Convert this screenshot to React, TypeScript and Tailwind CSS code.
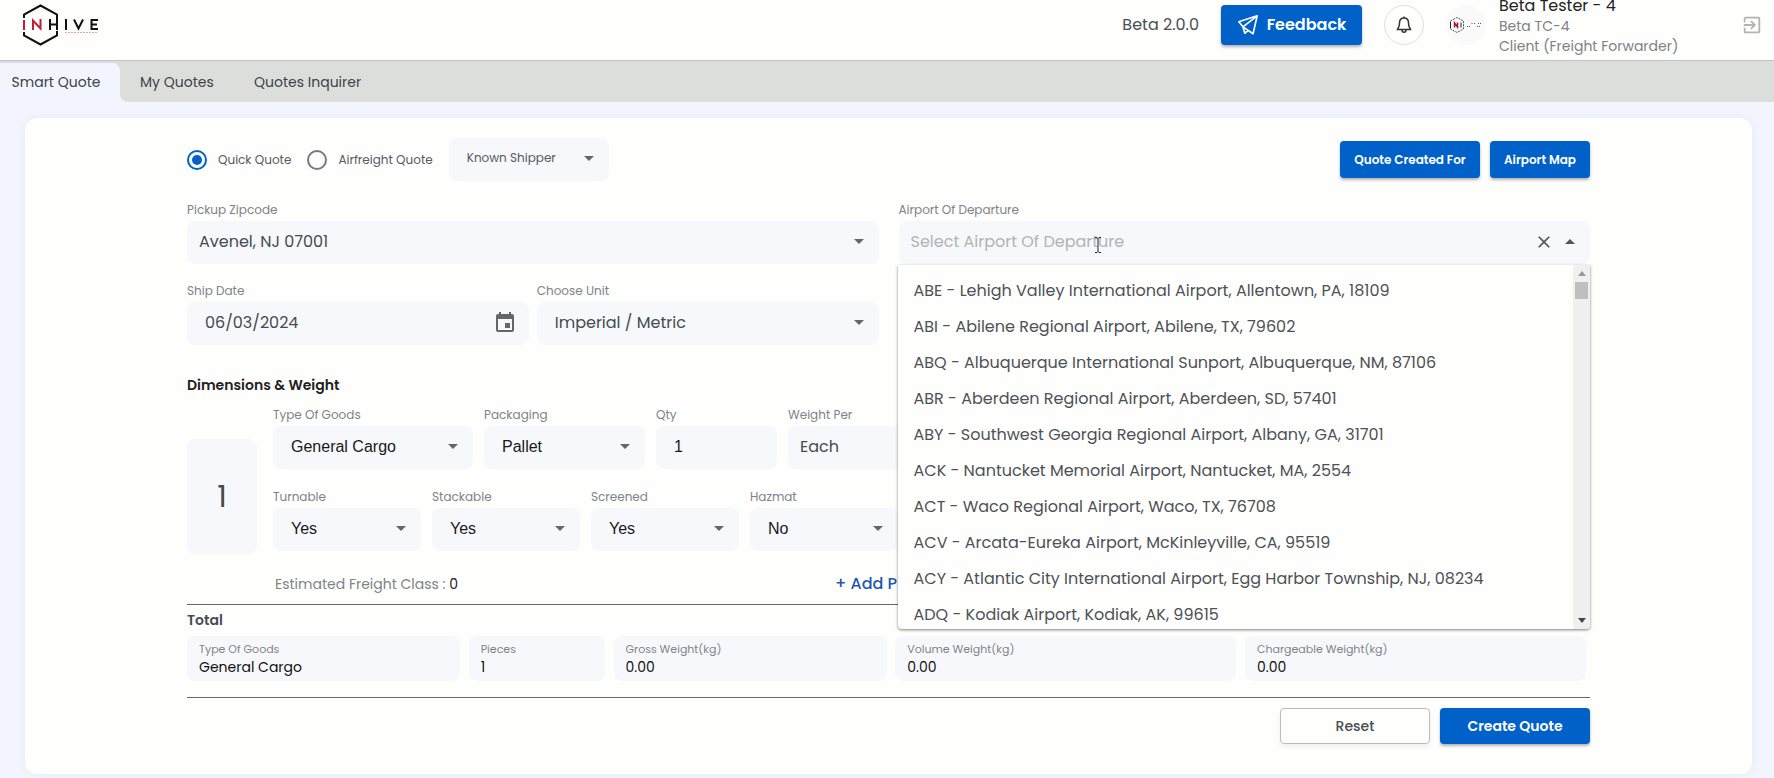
import React, { useState } from 'react';
import { MdArrowDropDown, MdArrowDropUp, MdClose, MdOutlineExitToApp, MdInsertInvitation } from 'react-icons/md';

const TABS = ['Smart Quote', 'My Quotes', 'Quotes Inquirer'];

const AIRPORTS = [
  'ABE - Lehigh Valley International Airport, Allentown, PA, 18109',
  'ABI - Abilene Regional Airport, Abilene, TX, 79602',
  'ABQ - Albuquerque International Sunport, Albuquerque, NM, 87106',
  'ABR - Aberdeen Regional Airport, Aberdeen, SD, 57401',
  'ABY - Southwest Georgia Regional Airport, Albany, GA, 31701',
  'ACK - Nantucket Memorial Airport, Nantucket, MA, 2554',
  'ACT - Waco Regional Airport, Waco, TX, 76708',
  'ACV - Arcata-Eureka Airport, McKinleyville, CA, 95519',
  'ACY - Atlantic City International Airport, Egg Harbor Township, NJ, 08234',
  'ADQ - Kodiak Airport, Kodiak, AK, 99615',
];

const TOTALS = [
  { label: 'Type Of Goods', value: 'General Cargo', width: 'w-[273px]' },
  { label: 'Pieces', value: '1', width: 'w-[136px]' },
  { label: 'Gross Weight(kg)', value: '0.00', width: 'w-[273px]' },
  { label: 'Volume Weight(kg)', value: '0.00', width: 'w-[341px]' },
  { label: 'Chargeable Weight(kg)', value: '0.00', width: 'w-[341px]' },
];

const PRIMARY = 'rounded bg-[#0061c9] font-semibold text-white shadow-[0_2px_3px_rgba(0,0,0,0.3)]';
const LABEL = 'mb-0.5 block text-xs leading-[18px] text-[#7d8488]';

function Logo() {
  return (
    <svg viewBox="0 0 80 42" className="mb-2.5 h-[42px] w-20" role="img" aria-label="InHive">
      <path d="M2 14V10.500L18.500 1.500 35 10.500V15M2 28V31.500L18.500 40.500 35 31.500V27" fill="none" stroke="#111" strokeWidth="2" />
      <path d="M2 16V26M11 26V16.500L18.500 24.500V15" fill="none" stroke="#c21f36" strokeWidth="2" />
      <path d="M28 15V26M35 15V26M28 20.500H35M44 15V26M52 15.500L56.500 24.500 61 15.500M76 16H69.500V25H76M69.500 20.500H75" fill="none" stroke="#111" strokeWidth="2" />
      <path d="M43 28.500H76" stroke="#e0a8b0" strokeWidth="1" strokeDasharray="2 1" />
    </svg>
  );
}

function AvatarLogo() {
  return (
    <svg viewBox="0 0 34 18" className="h-[18px] w-[34px]" role="img" aria-label="InHive">
      <path d="M1.500 5 8 1.500 14.500 5V13L8 16.500 1.500 13Z" fill="none" stroke="#555" strokeDasharray="2 1" />
      <path d="M1.500 6V12" stroke="#222" />
      <path d="M5.500 11.500V7L8.500 11V6.500" fill="none" stroke="#a8142c" strokeWidth="1.500" />
      <path d="M12 6.500V11.500" stroke="#222" />
      <path d="M18 10.500H21M23 7V9M25.500 7V9M29 7.500H32M28 10.500H32" stroke="#555" strokeDasharray="1 1" />
    </svg>
  );
}

interface SelectFieldProps {
  id: string;
  label: string;
  value: string;
  width?: string;
  arial?: boolean;
  pad?: string;
}

function SelectField({ id, label, value, width = '', arial, pad = 'pl-[18px]' }: SelectFieldProps) {
  return (
    <div className={`shrink-0 ${width}`}>
      <label htmlFor={id} className={LABEL}>{label}</label>
      <div className="relative">
        <select
          id={id}
          className={`block h-[43px] w-full appearance-none rounded-lg bg-[#f7f8fb] ${pad} pb-0.5 pr-10 text-base ${
            arial ? "font-['Liberation_Sans',sans-serif] text-[#17191c]" : 'text-[#454b50]'
          }`}
        >
          <option>{value}</option>
        </select>
        <MdArrowDropDown size={24} className="pointer-events-none absolute right-2 top-2 text-[#666]" />
      </div>
    </div>
  );
}

function Header() {
  return (
    <header className="flex h-[61px] items-center overflow-hidden border-b border-[#c3c4c3] bg-[#fefefd] pl-[22px] pr-[11px]">
      <Logo />
      <div className="mb-2.5 ml-auto flex items-center">
        <span className="text-base text-[#4a4f53]">Beta 2.0.0</span>
        <button className={`ml-[22px] flex h-10 w-[141px] items-center justify-center gap-2 text-base ${PRIMARY}`}>
          <svg viewBox="0 0 24 24" className="size-[22px]" fill="none" stroke="currentColor" strokeWidth="1.800" strokeLinejoin="round">
            <path d="M22 2 2 8.500 6.500 14 17.500 21.500ZM22 2 6.500 14 8.500 21 12 18" />
          </svg>
          Feedback
        </button>
        <button aria-label="Notifications" className="ml-[22px] flex size-10 items-center justify-center rounded-full border border-[#e0e0e4]">
          <svg viewBox="0 0 16 18" className="h-[18px] w-4" fill="none" stroke="#333" strokeWidth="1.500">
            <path d="M8 2C5 2 3.500 4 3.500 7C3.500 10.500 2.500 11.500 1.500 13.500H14.500C13.500 11.500 12.500 10.500 12.500 7C12.500 4 11 2 8 2ZM8 .5V2M6 14C6 17 10 17 10 14" />
          </svg>
        </button>
        <div className="ml-[22px] flex size-10 items-center justify-center rounded-full bg-[#fafafa]">
          <AvatarLogo />
        </div>
        <div className="ml-[13px] w-[242px] pt-0.5 text-sm leading-5 text-[#808285]">
          <p className="text-base leading-5 text-[#222]">Beta Tester - 4</p>
          <p>Beta TC-4</p>
          <p>Client (Freight Forwarder)</p>
        </div>
        <button aria-label="Log out" className="text-[#b3b3b3]">
          <MdOutlineExitToApp size={22} />
        </button>
      </div>
    </header>
  );
}

function AirportField() {
  const [open, setOpen] = useState(true);
  const [query, setQuery] = useState('');

  return (
    <div className="relative min-w-0 flex-1 self-start">
      <label htmlFor="departure" className={LABEL}>Airport Of Departure</label>
      <div className="flex h-[43px] items-center rounded-lg bg-[#f7f8fb] pb-px pl-3 pr-2 text-[#555]">
        <input
          id="departure"
          value={query}
          onChange={(e) => setQuery(e.target.value)}
          placeholder="Select Airport Of Departure"
          className="min-w-0 flex-1 bg-transparent text-base outline-none placeholder:text-[#b0b4b7]"
        />
        <button aria-label="Clear" onClick={() => setQuery('')}><MdClose size={20} /></button>
        <button aria-label="Toggle airports" className="ml-1" onClick={() => setOpen(!open)}><MdArrowDropUp size={24} /></button>
      </div>
      <svg viewBox="0 0 8 16" className="pointer-events-none absolute left-[195px] top-9 h-4 w-2" fill="none" stroke="#222">
        <path d="M1 .5H3L4 1.500 5 .5H7M4 1.500V14.500M1 15.500H3L4 14.500 5 15.500H7" />
      </svg>
      {open && (
        <div className="absolute -left-px right-0 top-full z-10 mt-px flex h-[364px] overflow-hidden rounded-b bg-[#fefefd] shadow-[0_1px_3px_rgba(0,0,0,0.5)]">
          <ul className="min-w-0 flex-1 pt-2">
            {AIRPORTS.map((a) => (
              <li key={a} className="h-9 truncate px-4 text-base leading-9 text-[#4d5256]">{a}</li>
            ))}
          </ul>
          <div className="flex w-[17px] flex-col items-center bg-[#f0f0f0] py-1.5">
            <svg viewBox="0 0 8 5" className="h-[5px] w-2"><path d="M0 5 4 0 8 5Z" fill="#999" /></svg>
            <div className="mt-1.5 h-[17px] w-[13px] bg-[#bfbfbf]" />
            <svg viewBox="0 0 8 5" className="mt-auto h-[5px] w-2"><path d="M0 0 4 5 8 0Z" fill="#444" /></svg>
          </div>
        </div>
      )}
    </div>
  );
}

export default function App() {
  const [tab, setTab] = useState('Smart Quote');
  const [mode, setMode] = useState('Quick Quote');

  return (
    <div className="min-h-screen bg-[#f2f5fd] font-[Poppins,Inter,sans-serif]">
      <Header />
      <nav className="flex h-[41px] bg-[#f2f5fd] text-sm text-[#3c4248]">
        {TABS.map((t, i) => (
          <div
            key={t}
            className={
              i === 0
                ? 'w-[120px] bg-[#dcdedc] pt-0.5'
                : i === 1
                  ? 'w-[114px] rounded-bl-lg bg-[#dcdedc]'
                  : 'flex-1 bg-[#dcdedc]'
            }
          >
            <button
              onClick={() => setTab(t)}
              aria-current={tab === t}
              className={i === 0 ? 'h-full w-full rounded-tr-lg bg-[#f2f5fd] pb-0.5 pr-2' : 'h-full px-5'}
            >
              {t}
            </button>
          </div>
        ))}
      </nav>

      <div className="pb-1 pl-[25px] pr-[22px] pt-4">
        <main className="rounded-xl bg-[#fefefd] px-[162px] pb-[30px] pt-5 shadow-[0_0_8px_rgba(90,110,160,0.08)]">
          <div className="flex items-center">
            {['Quick Quote', 'Airfreight Quote'].map((m) => (
              <label key={m} className="mr-4 flex items-center gap-[11px] text-xs text-[#555c61]">
                <input
                  type="radio"
                  name="mode"
                  checked={mode === m}
                  onChange={() => setMode(m)}
                  className="size-5 appearance-none rounded-full border-2 border-[#777786] bg-clip-content p-[3px] checked:border-[#0061c9] checked:bg-[#0061c9]"
                />
                {m}
              </label>
            ))}
            <div className="relative w-[160px]">
              <select aria-label="Shipper" className="block h-[43px] w-full appearance-none rounded-lg bg-[#f7f8fb] pb-1 pl-[18px] text-xs text-[#555c61]">
                <option>Known Shipper</option>
              </select>
              <MdArrowDropDown size={24} className="pointer-events-none absolute right-2 top-2 text-[#666]" />
            </div>
            <button className={`ml-auto h-[37px] w-[140px] text-xs ${PRIMARY}`}>Quote Created For</button>
            <button className={`ml-2.5 h-[37px] w-[100px] text-xs ${PRIMARY}`}>Airport Map</button>
          </div>

          <div className="mt-5 flex gap-5">
            <div className="min-w-0 flex-1">
              <SelectField id="pickup" label="Pickup Zipcode" value="Avenel, NJ 07001" pad="pl-3" />
              <div className="mt-[18px] flex gap-2">
                <div className="min-w-0 flex-1">
                  <label htmlFor="ship" className={LABEL}>Ship Date</label>
                  <div className="flex h-[43px] items-center rounded-lg bg-[#f7f8fb] pb-0.5 pl-[18px] pr-3">
                    <input id="ship" defaultValue="06/03/2024" className="min-w-0 flex-1 bg-transparent text-base text-[#454b50] outline-none" />
                    <MdInsertInvitation size={24} className="text-[#666]" />
                  </div>
                </div>
                <div className="min-w-0 flex-1">
                  <SelectField id="unit" label="Choose Unit" value="Imperial / Metric" />
                </div>
              </div>
            </div>
            <AirportField />
          </div>

          <h2 className="mt-[30px] text-sm leading-5 font-semibold text-[#222]">Dimensions &amp; Weight</h2>
          <div className="mt-[11px] flex gap-4">
            <div className="mt-[33px] flex h-[115px] w-[70px] shrink-0 items-center justify-center rounded-lg bg-[#f7f8fb] text-3xl text-[#454b50]">1</div>
            <div className="min-w-0 flex-1 overflow-hidden">
              <div className="flex gap-[11px]">
                <SelectField id="goods" label="Type Of Goods" value="General Cargo" width="w-[200px]" arial />
                <SelectField id="packaging" label="Packaging" value="Pallet" width="w-[161px]" arial />
                <div className="w-[121px] shrink-0">
                  <label htmlFor="qty" className={LABEL}>Qty</label>
                  <input id="qty" defaultValue="1" className="block h-[43px] w-full rounded-lg bg-[#f7f8fb] pb-0.5 pl-[18px] font-['Liberation_Sans',sans-serif] text-base text-[#17191c] outline-none" />
                </div>
                <SelectField id="per" label="Weight Per" value="Each" width="w-[160px]" pad="pl-3" />
              </div>
              <div className="mt-[19px] flex gap-[11px]">
                <SelectField id="turnable" label="Turnable" value="Yes" width="w-[148px]" arial />
                <SelectField id="stackable" label="Stackable" value="Yes" width="w-[148px]" arial />
                <SelectField id="screened" label="Screened" value="Yes" width="w-[148px]" arial />
                <SelectField id="hazmat" label="Hazmat" value="No" width="w-[148px]" arial />
              </div>
            </div>
          </div>

          <div className="mt-2.5 flex h-[41px] items-center border-b border-[#666] pl-[88px]">
            <p className="w-[560px] text-sm text-[#7d8488]">
              Estimated Freight Class : <span className="text-[#222]">0</span>
            </p>
            <button className="text-base font-medium text-[#1e58b0]">+ Add Piece</button>
          </div>

          <h2 className="mt-[5px] text-sm leading-5 font-semibold text-[#454b50]">Total</h2>
          <div className="mt-1.5 flex justify-between pr-1">
            {TOTALS.map((t) => (
              <div key={t.label} className={`h-[45px] rounded-lg bg-[#f7f8fb] px-3 pt-1 ${t.width}`}>
                <p className="text-[11px] leading-[18px] text-[#7d8488]">{t.label}</p>
                <p className="text-sm leading-[18px] text-[#111]">{t.value}</p>
              </div>
            ))}
          </div>

          <div className="mt-4 flex justify-end gap-2.5 border-t border-[#666] pt-2.5">
            <button className="h-9 w-[150px] rounded border border-[#bbb] text-sm font-medium text-[#454b50] shadow-[0_3px_5px_rgba(0,0,0,0.06)]">Reset</button>
            <button className={`h-9 w-[150px] text-sm ${PRIMARY}`}>Create Quote</button>
          </div>
        </main>
      </div>
    </div>
  );
}
